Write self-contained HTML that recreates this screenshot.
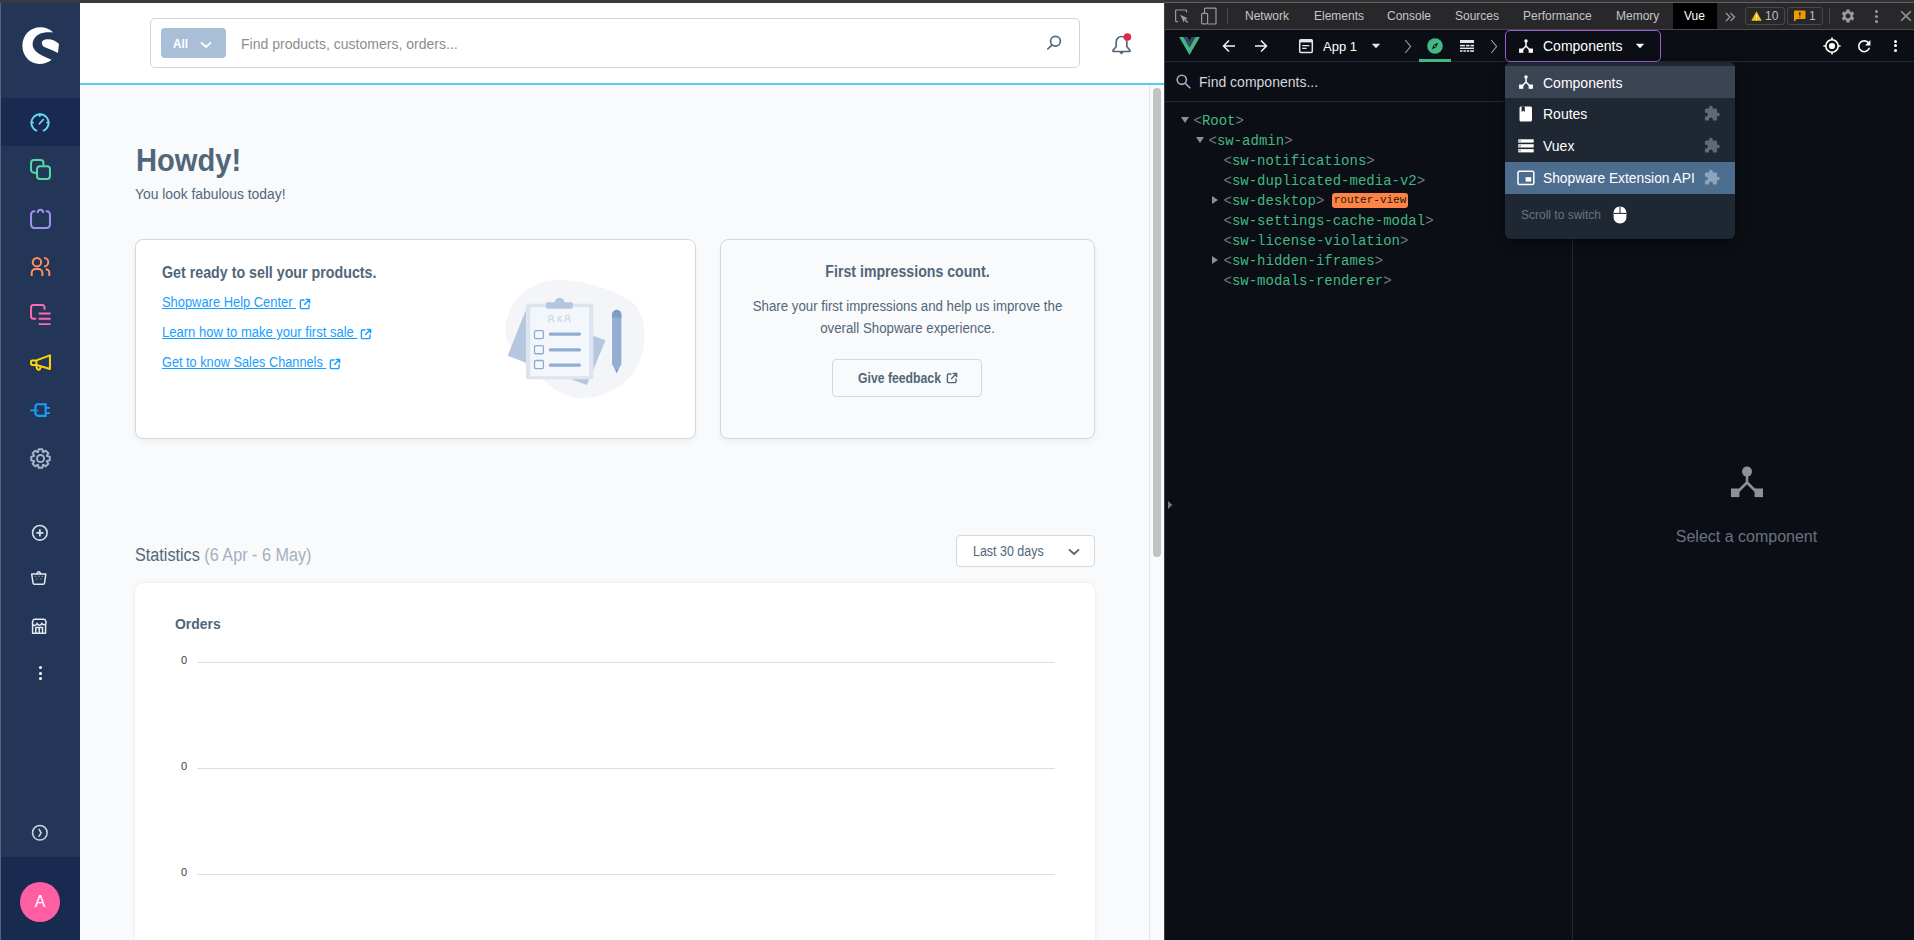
<!DOCTYPE html>
<html><head><meta charset="utf-8">
<style>
*{margin:0;padding:0;box-sizing:border-box}
html,body{width:1914px;height:940px;overflow:hidden;background:#0b0e14;font-family:"Liberation Sans",sans-serif}
.a{position:absolute}
#topstrip{left:0;top:0;width:1914px;height:3px;background:#3a3a3c}
#main{left:0;top:3px;width:1164px;height:937px;background:#f9fafb;overflow:hidden}
#side{left:1px;top:0;width:79px;height:937px;background:#243658}
#leftedge{left:0;top:0;width:1px;height:937px;background:#56637a}
#hdr{left:80px;top:0;width:1084px;height:80px;background:#fff}
#hdrline{left:80px;top:80px;width:1084px;height:2px;background:#57cbf0}
#scroll{left:1149px;top:82px;width:15px;height:855px;background:#f9fafb;border-left:1px solid #e3e5e8}
#thumb{left:1153px;top:85px;width:8px;height:469px;background:#c2c2c2;border-radius:4px}
#dev{left:1164px;top:3px;width:750px;height:937px;background:#0b0e14;border-left:1px solid #3c4048}
#dtbar{left:1165px;top:3px;width:749px;height:27px;background:#28282b;border-bottom:1px solid #4a4a4d}
#vuebar{left:1165px;top:30px;width:749px;height:32px;background:#0b0e14;border-bottom:1px solid #1f2937}
.t{white-space:nowrap;line-height:1}
.lk{font-size:14px;color:#189eff;text-decoration:underline;transform:scaleX(0.935);transform-origin:0 0}
.ax{font-size:11px;color:#373d3f}
.dtt{top:10px;font-size:12px;line-height:12px;color:#c6c6c8;white-space:nowrap}
.vt{font-size:13px;line-height:13px;color:#fff;white-space:nowrap}
.tr{font-family:"Liberation Mono",monospace;font-size:14px;line-height:14px;color:#42b883;white-space:nowrap}
.tr i{font-style:normal;color:#737a85}
.dd{font-size:14px;line-height:14px}
</style></head><body>
<div class="a" id="topstrip"></div>
<div class="a" id="main">
  <div class="a" id="leftedge"></div>
  <div class="a" id="side">
    <svg class="a" style="left:21px;top:24px" width="37" height="37" viewBox="0 0 100 100"><path fill="#fff" d="M84.5,14.6 C72,4 60,1 50,1 C22,1 1,23 1,51 C1,79 22,100 47,100 C60,100 72,95 80,88.5 C62,80 47,75 38,66 C31,59 28,52 28.7,44.6 C30,32 40,18 58,15.4 C67,14 76,14 84.5,14.6 Z M53.5,43 C53,37 61,33 70.5,33 C82,33 92,38 100,46 L97,70 C85,64 72,59 62,55 C56,52 54,48 53.5,43 Z"/></svg>
    <div class="a" style="left:0;top:95px;width:79px;height:48px;background:#192a50"></div>
    <svg class="a" style="left:29px;top:110px" width="20" height="20" viewBox="0 0 20 20" fill="none" stroke="#64d6f7" stroke-width="1.9" stroke-linecap="round"><path d="M6.3,17.6 A8.6,8.6 0 1 1 13.7,17.6"/><path d="M9.8,1.5 V3 M1.4,9.6 H2.9 M17.1,9.6 H18.6"/><path d="M13.2,6.6 L9.4,10.8" stroke-width="1.7"/></svg>
    <svg class="a" style="left:29px;top:156px" width="21" height="21" viewBox="0 0 20 20" fill="none" stroke="#57d9a3" stroke-width="1.9"><path d="M6.2,13 H3.8 a2.8,2.8 0 0 1 -2.8,-2.8 V3.8 a2.8,2.8 0 0 1 2.8,-2.8 H10 a2.8,2.8 0 0 1 2.8,2.8 V6.3"/><rect x="6.7" y="6.8" width="12.3" height="12.3" rx="2.8"/></svg>
    <svg class="a" style="left:29px;top:205px" width="21" height="21" viewBox="0 0 20 20" fill="none" stroke="#a092f0" stroke-width="1.9"><path d="M5,3.2 H4 a3,3 0 0 0 -3,3 V16 a3,3 0 0 0 3,3 H16 a3,3 0 0 0 3,-3 V6.2 a3,3 0 0 0 -3,-3 H15"/><path d="M7.4,4.8 V4.1 a2.5,2.5 0 0 1 5,0 V4.8"/></svg>
    <svg class="a" style="left:29px;top:253px" width="21" height="21" viewBox="0 0 20 20" fill="none" stroke="#ff9064" stroke-width="1.9"><circle cx="6.6" cy="5.9" r="4"/><path d="M13.4,1.9 a4,4 0 0 1 0,8"/><path d="M1.6,19 V16.2 a3.8,3.8 0 0 1 3.8,-3.8 H8 a3.8,3.8 0 0 1 3.8,3.8 V19"/><path d="M15,12.6 a3.4,3.4 0 0 1 3.4,3.4 V19"/></svg>
    <svg class="a" style="left:29px;top:301px" width="21" height="21" viewBox="0 0 20 20" fill="none" stroke="#ff68b4" stroke-width="1.9"><path d="M13.8,5.5 V3 a2,2 0 0 0 -2,-2 H3 a2,2 0 0 0 -2,2 V12 a2,2 0 0 0 2,2 H5.9"/><path d="M8.2,9.1 H19.6 M8.2,14.1 H19.6 M8.2,19.2 H19.6"/></svg>
    <svg class="a" style="left:29px;top:349px" width="21" height="21" viewBox="0 0 20 20" fill="none" stroke="#ffd700" stroke-width="1.9" stroke-linejoin="round"><rect x="1" y="8" width="5.1" height="4.3" rx="1.1"/><path d="M6.1,8 L19,3.2 V16.2 L6.1,12.3"/><path d="M5.8,12.4 L6.8,15.9 a1.5,1.5 0 0 0 2.6,0.4 L10.3,14"/></svg>
    <svg class="a" style="left:29px;top:397px" width="21" height="21" viewBox="0 0 20 20" fill="none" stroke="#189eff" stroke-width="2"><path d="M7.6,4.1 H14.9 V15.1 H7.6 a2.4,2.4 0 0 1 -2.4,-2.4 V6.5 a2.4,2.4 0 0 1 2.4,-2.4 Z"/><path d="M0.2,9.8 H5 M15,7.4 H19 M15,12.6 H19" stroke-width="1.7"/><ellipse cx="7.5" cy="10" rx="0.5" ry="1.1" fill="#189eff" stroke="none"/></svg>
    <svg class="a" style="left:29px;top:444.5px" width="21" height="21" viewBox="0 0 20 20" fill="none" stroke="#a7b6c7" stroke-width="1.8" stroke-linejoin="round"><path d="M16.18,7.67 L18.82,8.21 L18.82,11.79 L16.18,12.33 L16.01,12.72 L17.50,14.97 L14.97,17.50 L12.72,16.01 L12.33,16.18 L11.79,18.82 L8.21,18.82 L7.67,16.18 L7.28,16.01 L5.03,17.50 L2.50,14.97 L3.99,12.72 L3.82,12.33 L1.18,11.79 L1.18,8.21 L3.82,7.67 L3.99,7.28 L2.50,5.03 L5.03,2.50 L7.28,3.99 L7.67,3.82 L8.21,1.18 L11.79,1.18 L12.33,3.82 L12.72,3.99 L14.97,2.50 L17.50,5.03 L16.01,7.28Z"/><circle cx="10" cy="10" r="3.4"/></svg>
    <svg class="a" style="left:29px;top:520px" width="20" height="20" viewBox="0 0 20 20" fill="none" stroke="#d2deed" stroke-width="1.6"><circle cx="9.85" cy="9.8" r="7.3"/><path d="M9.85,6.2 V13.4 M6.25,9.8 H13.45" stroke-width="1.8"/></svg>
    <svg class="a" style="left:29px;top:566px" width="18" height="18" viewBox="0 0 18 18" fill="none" stroke="#dfe6ef" stroke-width="1.5" stroke-linejoin="round"><path d="M1.7,5.1 H15.8 L14.5,14.2 a1.2,1.2 0 0 1 -1.2,1 H4.3 a1.2,1.2 0 0 1 -1.2,-1 Z"/><path d="M6.6,5 L7.6,3.4 a1.4,1.4 0 0 1 2.3,0 L10.9,5"/><path d="M4.8,7.3 h1.3 M8.3,7.3 h1.3 M11.7,7.3 h1.3 M6.4,9.8 h1 M10.3,9.8 h1" stroke="#8290a6" stroke-width="1.3"/></svg>
    <svg class="a" style="left:29px;top:613.5px" width="18" height="18" viewBox="0 0 18 18" fill="none" stroke="#e3e9f1" stroke-width="1.5" stroke-linejoin="round"><path d="M3,3.4 a1.6,1.6 0 0 1 1.5,-1.2 H14 a1.6,1.6 0 0 1 1.5,1.2 L16.2,5.6 a2.2,2.2 0 0 1 -4.3,0.6 a2.5,2.5 0 0 1 -4.9,0 a2.3,2.3 0 0 1 -4.6,-0.2 Z"/><path d="M2.6,7.3 V16.3 H15.6 V7.3"/><path d="M5.8,16.3 V10.4 H12.5 V16.3 M9.2,10.4 V16.3"/></svg>
    <div class="a" style="left:37.5px;top:663px;width:3px;height:3px;border-radius:50%;background:#fff"></div>
    <div class="a" style="left:37.5px;top:668.5px;width:3px;height:3px;border-radius:50%;background:#fff"></div>
    <div class="a" style="left:37.5px;top:674px;width:3px;height:3px;border-radius:50%;background:#fff"></div>
    <svg class="a" style="left:29px;top:820px" width="20" height="20" viewBox="0 0 20 20" fill="none" stroke="#c8d4e4" stroke-width="1.5"><circle cx="9.85" cy="9.8" r="7.3"/><path d="M9.1,6.4 L11.1,9.8 L9.1,13.2" stroke-width="1.6" stroke-linecap="round"/></svg>
    <div class="a" style="left:0;top:854px;width:79px;height:83px;background:#192a50"></div>
    <div class="a" style="left:19px;top:879px;width:40px;height:40px;border-radius:50%;background:#ff5ea2;color:#fff;font-size:16px;line-height:40px;text-align:center">A</div>
  </div>
  <div class="a" id="hdr">
    <div class="a" style="left:70px;top:15px;width:930px;height:50px;border:1px solid #ccd6e0;border-radius:5px;background:#fff"></div>
    <div class="a" style="left:81px;top:25px;width:65px;height:30px;border-radius:4px;background:#a9bfd8"></div>
    <div class="a t" id="allt" style="left:93px;top:34px;font-size:13px;transform:scaleX(0.9);transform-origin:0 0;font-weight:bold;color:#fff">All</div>
    <svg class="a" style="left:120px;top:38px" width="12" height="8" viewBox="0 0 12 8" fill="none" stroke="#fff" stroke-width="1.8" stroke-linecap="round" stroke-linejoin="round"><path d="M1.5,1.8 L6,6 L10.5,1.8"/></svg>
    <div class="a t" id="ph" style="left:161px;top:33px;font-size:15px;transform:scaleX(0.935);transform-origin:0 0;color:#8b8d90">Find products, customers, orders...</div>
    <svg class="a" style="left:966px;top:31px" width="18" height="18" viewBox="0 0 18 18" fill="none" stroke="#52667a" stroke-width="1.7" stroke-linecap="round"><circle cx="9.5" cy="7.3" r="4.9"/><path d="M6,10.8 L1.8,15"/></svg>
    <svg class="a" style="left:1030px;top:29px" width="24" height="24" viewBox="0 0 24 24" fill="none" stroke="#52667a" stroke-width="1.7" stroke-linejoin="round"><path d="M11.5,4.5 a5.3,5.3 0 0 0 -5.3,5.3 V14.5 L3,18.5 a0.6,0.6 0 0 0 0.5,1 H19.5 a0.6,0.6 0 0 0 0.5,-1 L16.8,14.5 V9.8 a5.3,5.3 0 0 0 -5.3,-5.3 Z"/><path d="M10,19.8 L11.5,21.3 L13,19.8"/><circle cx="17.4" cy="5" r="3.8" fill="#de294c" stroke="none"/></svg>
  </div>
  <div class="a" id="hdrline"></div>
  <div class="a" id="content">
    <div class="a t" id="howdy" style="left:136px;top:141px;font-size:32px;transform:scaleX(0.91);transform-origin:0 0;font-weight:bold;color:#52667a">Howdy!</div>
    <div class="a t" id="fab" style="left:135px;top:184px;font-size:14px;transform:scaleX(0.99);transform-origin:0 0;color:#52667a">You look fabulous today!</div>
    <div class="a" style="left:135px;top:236px;width:561px;height:200px;border:1px solid #d1d9e0;border-radius:8px;background:#fff;box-shadow:0 3px 6px rgba(0,0,0,0.05)"></div>
    <div class="a t" id="c1h" style="left:162px;top:261.5px;font-size:16px;transform:scaleX(0.89);transform-origin:0 0;font-weight:bold;color:#52667a">Get ready to sell your products.</div>
    <svg class="a" style="left:495px;top:267px" width="160" height="135" viewBox="0 0 1114 940">
      <path fill="#f3f5f8" d="M430,70 C600,70 800,120 950,220 C1060,300 1080,560 960,720 C860,850 700,900 580,890 C450,880 360,790 260,700 C130,590 60,500 75,380 C90,220 250,70 430,70 Z"/>
      <path fill="#b5c7df" d="M212,285 L88,598 L640,800 L770,490 Z"/>
      <rect x="215" y="235" width="470" height="525" rx="14" fill="#dbe4ef"/>
      <rect x="245" y="258" width="410" height="482" fill="#f3f6fa"/>
      <rect x="355" y="225" width="187" height="45" rx="10" fill="#b4c6de"/>
      <circle cx="450" cy="230" r="36" fill="#b4c6de"/>
      <g fill="none" stroke="#d0dbe9" stroke-width="10"><circle cx="390" cy="330" r="14"/><circle cx="505" cy="330" r="14"/><path d="M380,345 L370,365 M400,345 L410,365 M495,345 L485,365 M515,345 L525,365 M440,320 L440,360 M465,320 L445,340 L465,360"/></g>
      <g fill="none" stroke="#8eaad0" stroke-width="9"><rect x="275" y="422" width="62" height="56" rx="9"/><rect x="275" y="527" width="62" height="56" rx="9"/><rect x="275" y="630" width="62" height="56" rx="9"/></g>
      <g stroke="#92acd2" stroke-width="22" stroke-linecap="round"><path d="M385,446 H588 M385,556 H588 M385,662 H588"/></g>
      <rect x="815" y="298" width="65" height="365" rx="8" fill="#94aed3"/>
      <path d="M815,330 V310 a32,32 0 0 1 65,0 V330 Z" fill="#7f9cc4"/>
      <path d="M815,655 L880,655 L848,718 Z" fill="#94aed3"/>
      <path d="M836,695 L860,695 L848,718 Z" fill="#7f9cc4"/>
    </svg>
    <svg class="a" style="left:299px;top:295px" width="12" height="12" viewBox="0 0 12 12" fill="none" stroke="#189eff" stroke-width="1.4" stroke-linecap="round" stroke-linejoin="round"><path d="M5,2 H2.6 a1.2,1.2 0 0 0 -1.2,1.2 V9.4 a1.2,1.2 0 0 0 1.2,1.2 H8.8 a1.2,1.2 0 0 0 1.2,-1.2 V7"/><path d="M7.2,1.4 H10.6 V4.8 M10.4,1.6 L5.6,6.4"/></svg><svg class="a" style="left:360px;top:325px" width="12" height="12" viewBox="0 0 12 12" fill="none" stroke="#189eff" stroke-width="1.4" stroke-linecap="round" stroke-linejoin="round"><path d="M5,2 H2.6 a1.2,1.2 0 0 0 -1.2,1.2 V9.4 a1.2,1.2 0 0 0 1.2,1.2 H8.8 a1.2,1.2 0 0 0 1.2,-1.2 V7"/><path d="M7.2,1.4 H10.6 V4.8 M10.4,1.6 L5.6,6.4"/></svg><svg class="a" style="left:329px;top:355px" width="12" height="12" viewBox="0 0 12 12" fill="none" stroke="#189eff" stroke-width="1.4" stroke-linecap="round" stroke-linejoin="round"><path d="M5,2 H2.6 a1.2,1.2 0 0 0 -1.2,1.2 V9.4 a1.2,1.2 0 0 0 1.2,1.2 H8.8 a1.2,1.2 0 0 0 1.2,-1.2 V7"/><path d="M7.2,1.4 H10.6 V4.8 M10.4,1.6 L5.6,6.4"/></svg>
    <div class="a t lk" id="l1" style="left:162px;top:292px;transform:scaleX(0.921)">Shopware Help Center&nbsp;</div>
    <div class="a t lk" id="l2" style="left:162px;top:322px;transform:scaleX(0.93)">Learn how to make your first sale&nbsp;</div>
    <div class="a t lk" id="l3" style="left:162px;top:352px;transform:scaleX(0.91)">Get to know Sales Channels&nbsp;</div>
    <div class="a" style="left:720px;top:236px;width:375px;height:200px;border:1px solid #d1d9e0;border-radius:8px;background:#f9fafb;box-shadow:0 3px 6px rgba(0,0,0,0.05)"></div>
    <div class="a t" id="c2h" style="left:720px;width:375px;text-align:center;top:261px;font-size:16px;transform:scaleX(0.884);font-weight:bold;color:#52667a">First impressions count.</div>
    <div class="a t" id="c2p" style="left:720px;width:375px;text-align:center;top:292px;font-size:14px;transform:scaleX(0.947);transform-origin:188px 0;line-height:22px;color:#52667a">Share your first impressions and help us improve the<br>overall Shopware experience.</div>
    <div class="a" style="left:832px;top:356px;width:150px;height:38px;border:1px solid #d1d9e0;border-radius:4px;background:#f9fafb"></div>
    <div class="a t" id="gf" style="left:858px;top:368px;font-size:14px;transform:scaleX(0.874);transform-origin:0 0;font-weight:bold;color:#52667a">Give feedback</div>
    <svg class="a" style="left:946px;top:369px" width="12" height="12" viewBox="0 0 12 12" fill="none" stroke="#52667a" stroke-width="1.4" stroke-linecap="round" stroke-linejoin="round"><path d="M5,2 H2.6 a1.2,1.2 0 0 0 -1.2,1.2 V9.4 a1.2,1.2 0 0 0 1.2,1.2 H8.8 a1.2,1.2 0 0 0 1.2,-1.2 V7"/><path d="M7.2,1.4 H10.6 V4.8 M10.4,1.6 L5.6,6.4"/></svg>
    <div class="a t" id="st" style="left:135px;top:543px;font-size:18px;transform:scaleX(0.9);transform-origin:0 0;color:#52667a">Statistics <span style="color:#a3b1bf">(6 Apr - 6 May)</span></div>
    <div class="a" style="left:956px;top:532px;width:139px;height:32px;border:1px solid #d1d9e0;border-radius:4px;background:#fff"></div>
    <div class="a t" id="l30" style="left:973px;top:541px;font-size:14px;transform:scaleX(0.89);transform-origin:0 0;color:#52667a">Last 30 days</div>
    <svg class="a" style="left:1068px;top:545px" width="12" height="8" viewBox="0 0 12 8" fill="none" stroke="#52667a" stroke-width="1.8" stroke-linecap="round" stroke-linejoin="round"><path d="M1.5,1.8 L6,6 L10.5,1.8"/></svg>
    <div class="a" style="left:135px;top:580px;width:960px;height:400px;border-radius:8px;background:#fff;box-shadow:0 0 4px rgba(0,0,0,0.08)"></div>
    <div class="a t" id="ord" style="left:175px;top:613px;font-size:15px;transform:scaleX(0.93);transform-origin:0 0;font-weight:bold;color:#52667a">Orders</div>
    <div class="a t ax" style="left:181px;top:652px">0</div>
    <div class="a" style="left:197px;top:659px;width:858px;height:1px;background:#dedede"></div>
    <div class="a t ax" style="left:181px;top:758px">0</div>
    <div class="a" style="left:197px;top:765px;width:858px;height:1px;background:#dedede"></div>
    <div class="a t ax" style="left:181px;top:864px">0</div>
    <div class="a" style="left:197px;top:871px;width:858px;height:1px;background:#dedede"></div>
  </div>
  <div class="a" id="scroll"></div>
  <div class="a" id="thumb"></div>
</div>
<div class="a" id="dev"></div>
<div class="a" style="left:1164px;top:0;width:750px;height:2px;background:#333236"></div>
<div class="a" style="left:1164px;top:2px;width:750px;height:1px;background:#616164"></div>
<div class="a" id="dtbar"></div>
<div class="a" id="vuebar"></div>
<!-- chrome toolbar icons -->
<svg class="a" style="left:1174px;top:9px" width="16" height="16" viewBox="0 0 16 16" fill="none" stroke="#9b9b9e" stroke-width="1.2"><path d="M4,12.6 H2.4 a0.8,0.8 0 0 1 -0.8,-0.8 V1.8 a0.8,0.8 0 0 1 0.8,-0.8 H11.8 a0.8,0.8 0 0 1 0.8,0.8 V3.5"/><path d="M6.2,5.8 L13.8,9.2 L10.6,10.2 L9.6,13.6 Z" fill="#9b9b9e" stroke="none"/><path d="M10.4,10.2 L13.6,13.6" stroke-width="1.5"/></svg>
<svg class="a" style="left:1200px;top:7px" width="18" height="18" viewBox="0 0 18 18" fill="none" stroke="#9b9b9e" stroke-width="1.2"><path d="M4.5,6 V2 a0.8,0.8 0 0 1 0.8,-0.8 H15.2 a0.8,0.8 0 0 1 0.8,0.8 V16.2 a0.8,0.8 0 0 1 -0.8,0.8 H8"/><rect x="1.6" y="6.4" width="6" height="10.4" rx="1"/></svg>
<div class="a" style="left:1227px;top:8px;width:1px;height:16px;background:#4a4a4d"></div>
<div class="a dtt" style="left:1245px">Network</div>
<div class="a dtt" style="left:1314px">Elements</div>
<div class="a dtt" style="left:1387px">Console</div>
<div class="a dtt" style="left:1455px">Sources</div>
<div class="a dtt" style="left:1523px">Performance</div>
<div class="a dtt" style="left:1616px">Memory</div>
<div class="a" style="left:1673px;top:3px;width:44px;height:26px;background:#000"></div>
<div class="a dtt" style="left:1684px;color:#fff">Vue</div>
<svg class="a" style="left:1725px;top:12px" width="11" height="10" viewBox="0 0 11 10" fill="none" stroke="#9b9b9e" stroke-width="1.3"><path d="M1,1 L5,5 L1,9 M5.5,1 L9.5,5 L5.5,9"/></svg>
<div class="a" style="left:1745px;top:7px;width:40px;height:18px;border:1px solid #47474a;border-radius:3px"></div>
<svg class="a" style="left:1751px;top:11px" width="11" height="10" viewBox="0 0 11 10"><path d="M5.5,0.3 L10.7,9.8 H0.3 Z" fill="#f5c518"/><path d="M5.5,3.5 V6.8 M5.5,8 V8.8" stroke="#fff" stroke-width="1.1"/></svg>
<div class="a dtt" style="left:1765px;color:#bdbdbf">10</div>
<div class="a" style="left:1787px;top:7px;width:36px;height:18px;border:1px solid #47474a;border-radius:3px"></div>
<svg class="a" style="left:1793px;top:10px" width="13" height="12" viewBox="0 0 13 12"><path d="M1.5,0.5 H11.5 a1,1 0 0 1 1,1 V8 a1,1 0 0 1 -1,1 H4 L1,11.6 V1.5 a1,1 0 0 1 0.5,-1 Z" fill="#f29900"/><path d="M6.8,2.3 V5.6 M6.8,6.7 V7.6" stroke="#28282b" stroke-width="1.5"/></svg>
<div class="a dtt" style="left:1809px;color:#bdbdbf">1</div>
<div class="a" style="left:1829px;top:8px;width:1px;height:16px;background:#4a4a4d"></div>
<svg class="a" style="left:1840px;top:8px" width="16" height="16" viewBox="0 0 24 24"><path fill="#9b9b9e" d="M19.14,12.94c0.04-0.3,0.06-0.61,0.06-0.94c0-0.32-0.02-0.64-0.07-0.94l2.03-1.58c0.18-0.14,0.23-0.41,0.12-0.61 l-1.92-3.32c-0.12-0.22-0.37-0.29-0.59-0.22l-2.39,0.96c-0.5-0.38-1.03-0.7-1.62-0.94L14.4,2.81c-0.04-0.24-0.24-0.41-0.48-0.41 h-3.84c-0.24,0-0.43,0.17-0.47,0.41L9.25,5.35C8.66,5.59,8.12,5.92,7.63,6.29L5.24,5.33c-0.22-0.08-0.47,0-0.59,0.22L2.74,8.87 C2.62,9.08,2.66,9.34,2.86,9.48l2.03,1.58C4.84,11.36,4.8,11.69,4.8,12s0.02,0.64,0.07,0.94l-2.03,1.58 c-0.18,0.14-0.23,0.41-0.12,0.61l1.92,3.32c0.12,0.22,0.37,0.29,0.59,0.22l2.39-0.96c0.5,0.38,1.03,0.7,1.62,0.94l0.36,2.54 c0.05,0.24,0.24,0.41,0.48,0.41h3.84c0.24,0,0.44-0.17,0.47-0.41l0.36-2.54c0.59-0.24,1.13-0.56,1.62-0.94l2.39,0.96 c0.22,0.08,0.47,0,0.59-0.22l1.92-3.32c0.12-0.22,0.07-0.47-0.12-0.61L19.14,12.94z M12,15.6c-1.98,0-3.6-1.62-3.6-3.6 s1.62-3.6,3.6-3.6s3.6,1.62,3.6,3.6S13.98,15.6,12,15.6z"/></svg>
<div class="a" style="left:1875px;top:10px;width:3px;height:3px;border-radius:50%;background:#9b9b9e"></div>
<div class="a" style="left:1875px;top:15px;width:3px;height:3px;border-radius:50%;background:#9b9b9e"></div>
<div class="a" style="left:1875px;top:20px;width:3px;height:3px;border-radius:50%;background:#9b9b9e"></div>
<svg class="a" style="left:1900px;top:10px" width="12" height="12" viewBox="0 0 12 12" stroke="#9b9b9e" stroke-width="1.5"><path d="M1.2,1.2 L10.8,10.8 M10.8,1.2 L1.2,10.8"/></svg>
<!-- vue toolbar -->
<svg class="a" style="left:1179px;top:37px" width="21" height="18" viewBox="0 0 261.76 226.69"><path fill="#42b883" d="M161.096.001l-30.225 52.351L100.647.001H-.005l130.877 226.688L261.749.001z"/><path fill="#35495e" d="M161.096.001l-30.225 52.351L100.647.001H52.346l78.526 136.01L209.398.001z"/></svg>
<svg class="a" style="left:1222px;top:39px" width="14" height="14" viewBox="0 0 14 14" fill="none" stroke="#f5f5f5" stroke-width="1.5"><path d="M13,7 H2 M7,1.5 L1.5,7 L7,12.5"/></svg>
<svg class="a" style="left:1254px;top:39px" width="14" height="14" viewBox="0 0 14 14" fill="none" stroke="#f5f5f5" stroke-width="1.5"><path d="M1,7 H12 M7,1.5 L12.5,7 L7,12.5"/></svg>
<svg class="a" style="left:1298px;top:38px" width="16" height="16" viewBox="0 0 16 16"><rect x="1.7" y="1.8" width="12.6" height="12.6" rx="1.2" fill="none" stroke="#e5e7eb" stroke-width="1.5"/><rect x="1.7" y="1.8" width="12.6" height="2.6" fill="#e5e7eb"/><path d="M4.3,7.6 H11.5 M4.3,10.4 H8.6" stroke="#e5e7eb" stroke-width="1.3"/></svg>
<div class="a vt" style="left:1323px;top:39.5px">App 1</div>
<svg class="a" style="left:1371px;top:43px" width="10" height="6" viewBox="0 0 10 6"><path d="M0.8,0.8 H9.2 L5,5.2 Z" fill="#e5e7eb"/></svg>
<svg class="a" style="left:1404px;top:39px" width="8" height="15" viewBox="0 0 8 15" fill="none" stroke="#a1a1aa" stroke-width="1.1"><path d="M1.2,1 L6.6,7.5 L1.2,14"/></svg>
<svg class="a" style="left:1427px;top:38px" width="16" height="16" viewBox="0 0 16 16"><circle cx="8" cy="8" r="7.8" fill="#42b883"/><path d="M11.3,4.7 L9.2,9.2 L4.7,11.3 L6.8,6.8 Z" fill="#0b0e14"/><circle cx="8" cy="8" r="0.9" fill="#42b883"/></svg>
<div class="a" style="left:1419px;top:59px;width:32px;height:3px;background:#42b883"></div>
<svg class="a" style="left:1459px;top:39px" width="16" height="14" viewBox="0 0 16 14" fill="#e5e7eb"><rect x="1" y="1" width="14" height="3"/><rect x="1" y="5.8" width="5" height="1.6"/><rect x="7" y="5.8" width="3.5" height="1.6"/><rect x="11.5" y="5.8" width="3.5" height="1.6"/><rect x="1" y="8.6" width="14" height="1.4"/><rect x="1" y="11.2" width="2.4" height="1.6"/><rect x="4.4" y="11.2" width="2.4" height="1.6"/><rect x="7.8" y="11.2" width="2.4" height="1.6"/><rect x="11.2" y="11.2" width="3.8" height="1.6"/></svg>
<svg class="a" style="left:1490px;top:39px" width="8" height="15" viewBox="0 0 8 15" fill="none" stroke="#a1a1aa" stroke-width="1.1"><path d="M1.2,1 L6.6,7.5 L1.2,14"/></svg>
<div class="a" style="left:1505px;top:30px;width:156px;height:32px;border:1px solid #9a5fd0;border-radius:5px;background:#0b0e14"></div>
<svg class="a" style="left:1518px;top:38px" width="16" height="16" viewBox="0 0 24 24"><circle cx="12" cy="4.5" r="2.6" fill="#fff"/><path d="M12,5 V12 L5,19 M12,12 L19,19" stroke="#fff" stroke-width="2.2" fill="none"/><rect x="1.6" y="15.8" width="6.4" height="6.4" fill="#fff"/><rect x="16" y="15.8" width="6.4" height="6.4" fill="#fff"/></svg>
<div class="a vt" style="left:1543px;top:39px;font-size:14px;line-height:14px">Components</div>
<svg class="a" style="left:1635px;top:43px" width="10" height="6" viewBox="0 0 10 6"><path d="M0.8,0.8 H9.2 L5,5.2 Z" fill="#fff"/></svg>
<svg class="a" style="left:1823px;top:37px" width="18" height="18" viewBox="0 0 18 18" fill="none" stroke="#fff" stroke-width="1.6"><circle cx="9" cy="9" r="6.2"/><circle cx="9" cy="9" r="3.1" fill="#fff" stroke="none"/><path d="M9,0.4 V2.8 M9,15.2 V17.6 M0.4,9 H2.8 M15.2,9 H17.6"/></svg>
<svg class="a" style="left:1854.8px;top:36.8px" width="18.5" height="18.5" viewBox="0 0 24 24"><path fill="#fff" d="M17.65 6.35C16.2 4.9 14.21 4 12 4c-4.42 0-7.99 3.580-7.99 8s3.57 8 7.99 8c3.73 0 6.84-2.55 7.73-6h-2.08c-.82 2.33-3.04 4-5.65 4-3.31 0-6-2.69-6-6s2.69-6 6-6c1.66 0 3.14.69 4.22 1.78L13 11h7V4l-2.35 2.35z"/></svg>
<div class="a" style="left:1894.3px;top:39.8px;width:3.1px;height:3.1px;border-radius:50%;background:#fff"></div>
<div class="a" style="left:1894.3px;top:44.3px;width:3.1px;height:3.1px;border-radius:50%;background:#fff"></div>
<div class="a" style="left:1894.3px;top:48.9px;width:3.1px;height:3.1px;border-radius:50%;background:#fff"></div>

<!-- search row -->
<div class="a" style="left:1165px;top:101px;width:408px;height:1px;background:#1f2937"></div>
<svg class="a" style="left:1176px;top:74px" width="15" height="15" viewBox="0 0 15 15" fill="none" stroke="#9fb0c4" stroke-width="1.6"><circle cx="5.8" cy="5.8" r="4.6"/><path d="M9.2,9.2 L13.8,13.8" stroke-linecap="round"/></svg>
<div class="a vt" id="findc" style="left:1199px;top:75px;font-size:14px;line-height:14px;color:#d4d7dc">Find components...</div>
<!-- splitter -->
<div class="a" style="left:1572px;top:62px;width:1px;height:878px;background:#1f2937"></div>
<!-- tree -->
<div class="a tr" style="top:114px;left:1193.5px"><i>&lt;</i>Root<i>&gt;</i></div>
<div class="a tr" style="top:134px;left:1208.5px"><i>&lt;</i>sw-admin<i>&gt;</i></div>
<div class="a tr" style="top:154px;left:1223.5px"><i>&lt;</i>sw-notifications<i>&gt;</i></div>
<div class="a tr" style="top:174px;left:1223.5px"><i>&lt;</i>sw-duplicated-media-v2<i>&gt;</i></div>
<div class="a tr" style="top:194px;left:1223.5px"><i>&lt;</i>sw-desktop<i>&gt;</i></div>
<div class="a tr" style="top:214px;left:1223.5px"><i>&lt;</i>sw-settings-cache-modal<i>&gt;</i></div>
<div class="a tr" style="top:234px;left:1223.5px"><i>&lt;</i>sw-license-violation<i>&gt;</i></div>
<div class="a tr" style="top:254px;left:1223.5px"><i>&lt;</i>sw-hidden-iframes<i>&gt;</i></div>
<div class="a tr" style="top:274px;left:1223.5px"><i>&lt;</i>sw-modals-renderer<i>&gt;</i></div>
<svg class="a" style="left:1181px;top:117px" width="8" height="6" viewBox="0 0 8 6"><path d="M0,0 H8 L4,6 Z" fill="#8a8f98"/></svg>
<svg class="a" style="left:1196px;top:137px" width="8" height="6" viewBox="0 0 8 6"><path d="M0,0 H8 L4,6 Z" fill="#8a8f98"/></svg>
<svg class="a" style="left:1212px;top:196px" width="6" height="8" viewBox="0 0 6 8"><path d="M0,0 V8 L6,4 Z" fill="#8a8f98"/></svg>
<svg class="a" style="left:1212px;top:256px" width="6" height="8" viewBox="0 0 6 8"><path d="M0,0 V8 L6,4 Z" fill="#8a8f98"/></svg>
<div class="a" style="left:1332px;top:193px;width:76px;height:15px;border-radius:3px;background:#ff8344"></div>
<div class="a" style="left:1332px;top:193px;width:76px;height:15px;font-family:'Liberation Mono',monospace;font-size:11px;line-height:15px;color:#1a1a1a;text-align:center">router-view</div>
<!-- side arrow -->
<svg class="a" style="left:1168px;top:501px" width="5" height="9" viewBox="0 0 5 9"><path d="M0,0 V8 L4.3,4 Z" fill="#77797d"/></svg>
<!-- right pane empty state -->
<svg class="a" style="left:1731px;top:465.5px" width="32" height="33" viewBox="0 0 32 33"><circle cx="16" cy="5.6" r="5" fill="#8f9196"/><path d="M16,9 V16.5 L5.5,27 M16,16.5 L26.5,27" stroke="#8f9196" stroke-width="2.6" fill="none"/><rect x="0" y="22.5" width="8.4" height="8.6" fill="#8f9196"/><rect x="23.6" y="22.5" width="8.4" height="8.6" fill="#8f9196"/></svg>
<div class="a" id="selc" style="left:1576px;width:341px;top:529px;text-align:center;font-size:16px;line-height:16px;color:#6b7280;white-space:nowrap">Select a component</div>
<!-- dropdown -->
<div class="a" style="left:1505px;top:62px;width:230px;height:177px;border-radius:6px;background:#1f2733;box-shadow:0 4px 12px rgba(0,0,0,0.4)"></div>
<div class="a" style="left:1505px;top:66px;width:230px;height:32px;background:#3a4352"></div>
<div class="a" style="left:1505px;top:162px;width:230px;height:32px;background:#4d6d8f"></div>
<svg class="a" style="left:1518px;top:74px" width="16" height="16" viewBox="0 0 24 24"><circle cx="12" cy="4.5" r="2.6" fill="#fff"/><path d="M12,5 V12 L5,19 M12,12 L19,19" stroke="#fff" stroke-width="2.2" fill="none"/><rect x="1.6" y="15.8" width="6.4" height="6.4" fill="#fff"/><rect x="16" y="15.8" width="6.4" height="6.4" fill="#fff"/></svg>
<svg class="a" style="left:1519px;top:106px" width="14" height="16" viewBox="0 0 14 16"><rect x="0.5" y="0.5" width="12.5" height="15" rx="1.5" fill="#fff"/><path d="M2.6,0.5 V6 L4.2,4.8 L5.8,6 V0.5 Z" fill="#1f2733"/></svg>
<svg class="a" style="left:1518px;top:139px" width="16" height="14" viewBox="0 0 16 14"><rect x="0.3" y="0.3" width="15.4" height="3.3" fill="#fff"/><rect x="0.3" y="5.2" width="15.4" height="3.3" fill="#fff"/><rect x="0.3" y="10.1" width="15.4" height="3.3" fill="#fff"/><rect x="1.4" y="1.5" width="1.3" height="0.9" fill="#1f2733"/><rect x="1.4" y="6.4" width="1.3" height="0.9" fill="#1f2733"/><rect x="1.4" y="11.3" width="1.3" height="0.9" fill="#1f2733"/></svg>
<svg class="a" style="left:1517px;top:170px" width="18" height="16" viewBox="0 0 18 16" fill="none" stroke="#fff" stroke-width="1.5"><rect x="1" y="1.3" width="15.8" height="13.2" rx="1.5"/><rect x="8.6" y="7.2" width="5.6" height="4.4" fill="#fff" stroke="none"/></svg>
<div class="a vt dd" style="left:1543px;top:75.5px">Components</div>
<div class="a vt dd" style="left:1543px;top:107px">Routes</div>
<div class="a vt dd" style="left:1543px;top:139px">Vuex</div>
<div class="a vt dd" style="left:1543px;top:171px;transform:scaleX(0.985);transform-origin:0 0">Shopware Extension API</div>
<svg class="a pz" style="left:1703px;top:105px" width="18" height="17" viewBox="0 0 24 24"><path fill="#626971" d="M20.5 11H19V7c0-1.1-.9-2-2-2h-4V3.5C13 2.12 11.88 1 10.5 1S8 2.12 8 3.5V5H4c-1.1 0-1.99.9-1.99 2v3.8H3.5c1.49 0 2.7 1.21 2.7 2.7s-1.21 2.7-2.7 2.7H2V20c0 1.1.9 2 2 2h3.8v-1.5c0-1.49 1.21-2.7 2.7-2.7 1.49 0 2.7 1.21 2.7 2.7V22H17c1.1 0 2-.9 2-2v-4h1.5c1.38 0 2.5-1.12 2.5-2.5S21.880 11 20.5 11z"/></svg>
<svg class="a pz" style="left:1703px;top:137px" width="18" height="17" viewBox="0 0 24 24"><path fill="#626971" d="M20.5 11H19V7c0-1.1-.9-2-2-2h-4V3.5C13 2.12 11.88 1 10.5 1S8 2.12 8 3.5V5H4c-1.1 0-1.99.9-1.99 2v3.8H3.5c1.49 0 2.7 1.21 2.7 2.7s-1.21 2.7-2.7 2.7H2V20c0 1.1.9 2 2 2h3.8v-1.5c0-1.49 1.21-2.7 2.7-2.7 1.490 0 2.7 1.21 2.7 2.7V22H17c1.1 0 2-.9 2-2v-4h1.5c1.38 0 2.5-1.12 2.5-2.5S21.88 11 20.5 11z"/></svg>
<svg class="a pz" style="left:1703px;top:169px" width="18" height="17" viewBox="0 0 24 24"><path fill="#8ea4bd" d="M20.5 11H19V7c0-1.1-.9-2-2-2h-4V3.5C13 2.12 11.88 1 10.5 1S8 2.12 8 3.5V5H4c-1.1 0-1.99.9-1.99 2v3.8H3.5c1.49 0 2.7 1.21 2.7 2.7s-1.21 2.7-2.7 2.7H2V20c0 1.1.9 2 2 2h3.8v-1.5c0-1.49 1.21-2.7 2.7-2.7 1.49 0 2.7 1.21 2.7 2.7V22H17c1.1 0 2-.9 2-2v-4h1.5c1.38 0 2.5-1.12 2.5-2.5S21.88 11 20.5 11z"/></svg>
<div class="a" id="scrsw" style="left:1521px;top:209px;font-size:12px;line-height:12px;color:#6b7280;white-space:nowrap">Scroll to switch</div>
<svg class="a" style="left:1613px;top:206px" width="14" height="18" viewBox="0 0 14 18"><path d="M7,0.6 C10.5,0.6 13.4,3.4 13.4,7 V11.2 C13.4,14.8 10.5,17.4 7,17.4 C3.5,17.4 0.6,14.8 0.6,11.2 V7 C0.6,3.4 3.5,0.6 7,0.6 Z" fill="#fff"/><path d="M7,0.6 V7.4 M0.6,7.4 H13.4" stroke="#1f2733" stroke-width="1"/></svg>
</body></html>
